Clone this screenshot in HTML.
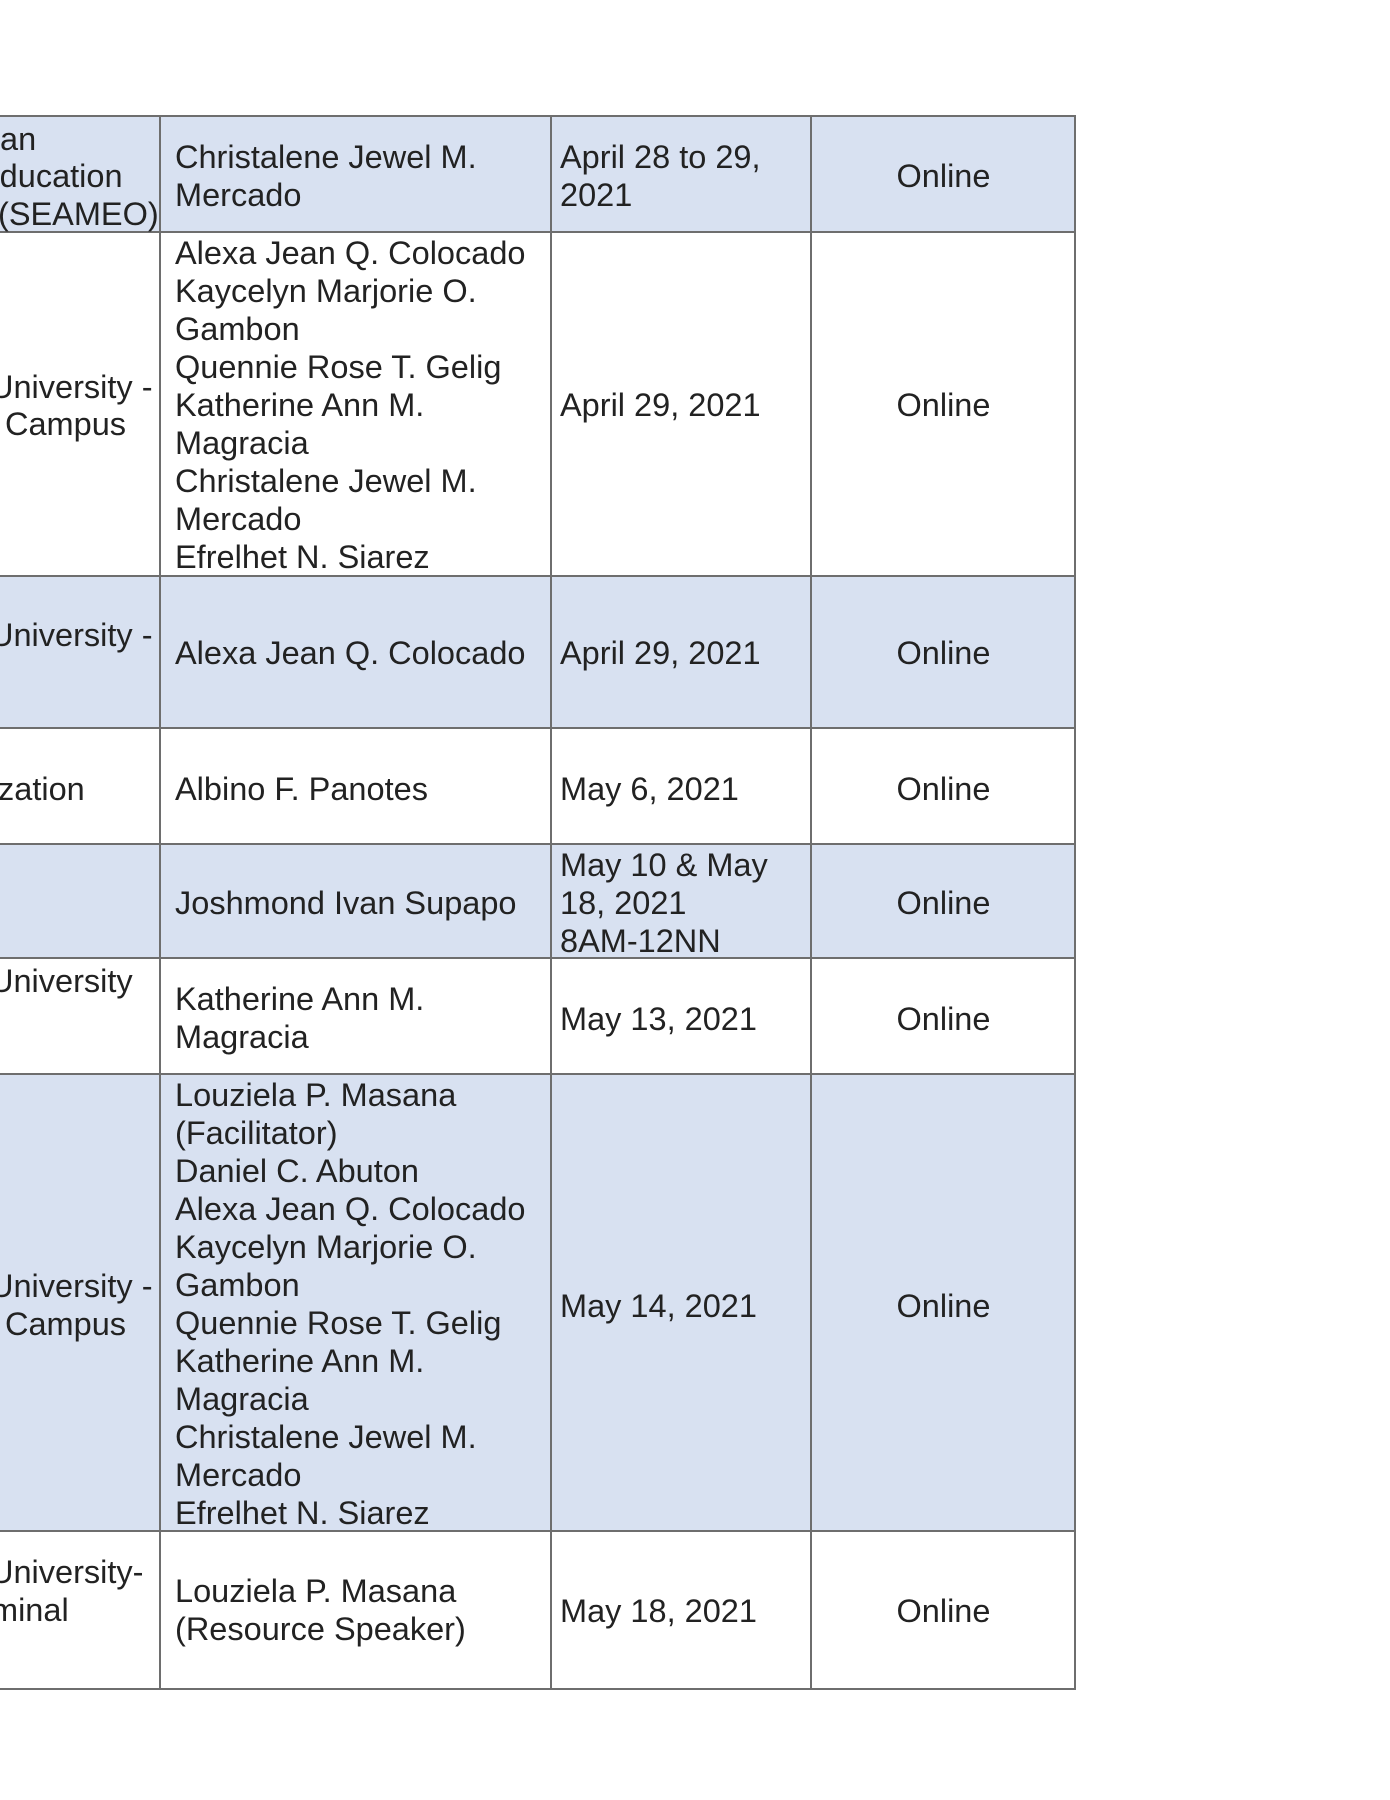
<!DOCTYPE html>
<html><head><meta charset="utf-8"><style>
body{margin:0;width:1390px;height:1800px;background:#fff;position:relative;overflow:hidden;font-family:"Liberation Sans",sans-serif;font-size:32.5px;color:#222}
.r{position:absolute;left:-10px;width:1086px;border:2px solid #6e6e6e;box-sizing:border-box}
.b{background:#d8e1f1}
.v{position:absolute;top:115px;height:1573px;width:2px;background:#6e6e6e}
.t{position:absolute;line-height:38px;white-space:nowrap;margin-top:2px}
.c{position:absolute;line-height:38px;white-space:nowrap;left:811px;width:265px;text-align:center;margin-top:2px}
</style></head><body>
<div class="r b" style="top:115px;height:118px"></div>
<div class="r" style="top:231px;height:346px"></div>
<div class="r b" style="top:575px;height:154px"></div>
<div class="r" style="top:727px;height:118px"></div>
<div class="r b" style="top:843px;height:116px"></div>
<div class="r" style="top:957px;height:118px"></div>
<div class="r b" style="top:1073px;height:459px"></div>
<div class="r" style="top:1530px;height:160px"></div>
<div class="v" style="left:159px"></div>
<div class="v" style="left:550px"></div>
<div class="v" style="left:810px"></div>
<div class="v" style="left:1074px"></div>

<!-- col1 -->
<div class="t" style="left:0;top:118px">an</div>
<div class="t" style="left:-22px;top:155px">Education</div>
<div class="t" style="left:-2px;top:193px">(SEAMEO)</div>
<div class="t" style="left:-10px;top:366px">University -</div>
<div class="t" style="left:5px;top:403px">Campus</div>
<div class="t" style="left:-10px;top:614px">University -</div>
<div class="t" style="left:-2px;top:768px">zation</div>
<div class="t" style="left:-10px;top:960px">University</div>
<div class="t" style="left:-10px;top:1265px">University -</div>
<div class="t" style="left:5px;top:1303px">Campus</div>
<div class="t" style="left:-10px;top:1551px">University-</div>
<div class="t" style="left:-9px;top:1589px">minal</div>

<!-- col2 -->
<div class="t" style="left:175px;top:136px">Christalene Jewel M.<br>Mercado</div>
<div class="t" style="left:175px;top:232px">Alexa Jean Q. Colocado<br>Kaycelyn Marjorie O.<br>Gambon<br>Quennie Rose T. Gelig<br>Katherine Ann M.<br>Magracia<br>Christalene Jewel M.<br>Mercado<br>Efrelhet N. Siarez</div>
<div class="t" style="left:175px;top:632px">Alexa Jean Q. Colocado</div>
<div class="t" style="left:175px;top:768px">Albino F. Panotes</div>
<div class="t" style="left:175px;top:882px">Joshmond Ivan Supapo</div>
<div class="t" style="left:175px;top:978px">Katherine Ann M.<br>Magracia</div>
<div class="t" style="left:175px;top:1074px">Louziela P. Masana<br>(Facilitator)<br>Daniel C. Abuton<br>Alexa Jean Q. Colocado<br>Kaycelyn Marjorie O.<br>Gambon<br>Quennie Rose T. Gelig<br>Katherine Ann M.<br>Magracia<br>Christalene Jewel M.<br>Mercado<br>Efrelhet N. Siarez</div>
<div class="t" style="left:175px;top:1570px">Louziela P. Masana<br>(Resource Speaker)</div>

<!-- col3 -->
<div class="t" style="left:560px;top:136px">April 28 to 29,<br>2021</div>
<div class="t" style="left:560px;top:384px">April 29, 2021</div>
<div class="t" style="left:560px;top:632px">April 29, 2021</div>
<div class="t" style="left:560px;top:768px">May 6, 2021</div>
<div class="t" style="left:560px;top:844px">May 10 &amp; May<br>18, 2021<br>8AM-12NN</div>
<div class="t" style="left:560px;top:998px">May 13, 2021</div>
<div class="t" style="left:560px;top:1285px">May 14, 2021</div>
<div class="t" style="left:560px;top:1590px">May 18, 2021</div>

<!-- col4 -->
<div class="c" style="top:155px">Online</div>
<div class="c" style="top:384px">Online</div>
<div class="c" style="top:632px">Online</div>
<div class="c" style="top:768px">Online</div>
<div class="c" style="top:882px">Online</div>
<div class="c" style="top:998px">Online</div>
<div class="c" style="top:1285px">Online</div>
<div class="c" style="top:1590px">Online</div>
</body></html>
